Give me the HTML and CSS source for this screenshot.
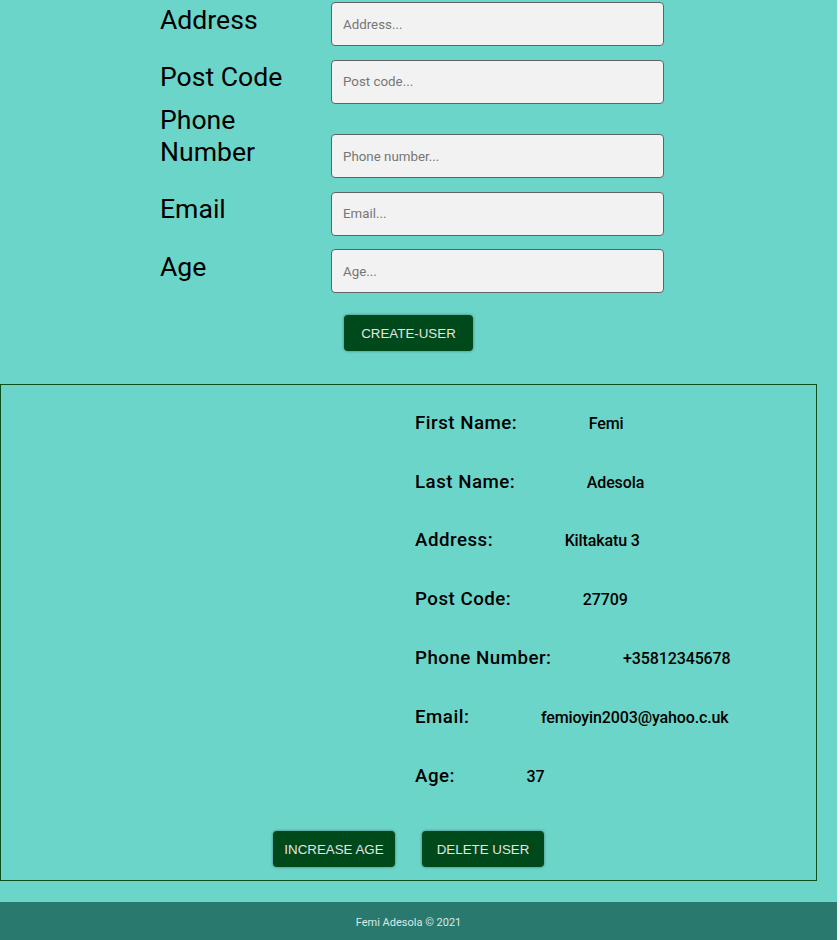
FILE: index.html
```html
<!DOCTYPE html>
<html lang="en">
<head>
<meta charset="utf-8">
<title>Users</title>
<link rel="stylesheet" href="styles.css">
</head>
<body>
<div class="page">
  <form class="user-form">
    <div class="form-row first"><label class="form-label">Address</label><input class="form-input" type="text" placeholder="Address..."></div>
    <div class="form-row"><label class="form-label">Post Code</label><input class="form-input" type="text" placeholder="Post code..."></div>
    <div class="form-row"><label class="form-label">Phone Number</label><input class="form-input" type="text" placeholder="Phone number..."></div>
    <div class="form-row"><label class="form-label">Email</label><input class="form-input" type="text" placeholder="Email..."></div>
    <div class="form-row"><label class="form-label">Age</label><input class="form-input" type="text" placeholder="Age..."></div>
    <div class="form-actions"><button type="button" class="btn btn-create">CREATE-USER</button></div>
  </form>

  <section class="user-card">
    <div class="user-media"></div>
    <div class="user-info">
      <div class="info-row"><h3 class="info-label">First Name:</h3><p class="info-value">Femi</p></div>
      <div class="info-row"><h3 class="info-label">Last Name:</h3><p class="info-value">Adesola</p></div>
      <div class="info-row"><h3 class="info-label">Address:</h3><p class="info-value">Kiltakatu 3</p></div>
      <div class="info-row"><h3 class="info-label">Post Code:</h3><p class="info-value">27709</p></div>
      <div class="info-row"><h3 class="info-label">Phone Number:</h3><p class="info-value">+35812345678</p></div>
      <div class="info-row"><h3 class="info-label">Email:</h3><p class="info-value">femioyin2003@yahoo.c.uk</p></div>
      <div class="info-row"><h3 class="info-label">Age:</h3><p class="info-value">37</p></div>
    </div>
    <div class="card-actions">
      <button type="button" class="btn btn-action">INCREASE AGE</button>
      <button type="button" class="btn btn-action">DELETE USER</button>
    </div>
  </section>
</div>
<footer class="site-footer">Femi Adesola © 2021</footer>
</body>
</html>
```
FILE: styles.css
```css
html {
  background: #f1f3f3;
}
body {
  margin: 0;
  width: 837px;
  background: #6cd5c9;
  font-family: Roboto, "Liberation Sans", sans-serif;
  color: #000;
}
.page {
  width: 817px;
  padding-bottom: 21px;
}
.user-form {
  padding: 2px 0 0 160px;
  margin: 0;
}
.form-row {
  font-size: 26.6px;
  line-height: 32px;
}
.form-label {
  display: inline-block;
  width: 171px;
  font-size: 26.6px;
  line-height: 32px;
  vertical-align: baseline;
}
.form-input {
  display: inline-block;
  vertical-align: baseline;
  box-sizing: border-box;
  width: 333px;
  height: 44px;
  margin: 13.5px 0 0;
  padding: 0 11px;
  border: 1px solid #5f6362;
  border-radius: 4px;
  background: #f2f2f2;
  font-family: Roboto, sans-serif;
  font-size: 13.33px;
  color: #222;
}
.form-row.first .form-input {
  margin-top: 0;
}
.form-input::placeholder {
  color: #767676;
}
.form-actions {
  margin-left: -160px;
  padding-top: 22px;
  text-align: center;
}
.btn {
  box-sizing: border-box;
  height: 36px;
  padding: 0;
  border: none;
  border-radius: 4px;
  background: #00491a;
  color: #e4e4e4;
  font-family: "Liberation Sans", Arial, sans-serif;
  font-size: 13.33px;
  box-shadow: 0 0 3px rgba(0, 0, 0, 0.45);
  cursor: pointer;
}
.btn-create {
  width: 129px;
}
.btn-action {
  width: 122px;
}
.user-card {
  box-sizing: border-box;
  width: 817px;
  margin-top: 33px;
  border: 1px solid #0c4f18;
  padding: 9px 0 13px;
  display: grid;
  grid-template-columns: 414px 1fr;
}
.user-info {
  display: flex;
  flex-direction: column;
}
.info-row {
  display: flex;
  align-items: baseline;
  padding: 17.9px 0;
}
.info-label {
  margin: 0;
  font-size: 18.72px;
  line-height: 22px;
  font-weight: 500;
  letter-spacing: 0.5px;
}
.info-value {
  margin: 0 0 0 71.5px;
  font-size: 16px;
  line-height: 22px;
  font-weight: 500;
  letter-spacing: -0.12px;
}
.card-actions {
  grid-column: 1 / -1;
  display: flex;
  justify-content: center;
  gap: 27px;
  margin-top: 26px;
}
.site-footer {
  height: 34px;
  line-height: 34px;
  padding: 4px 20px 0 0;
  background: #29796f;
  color: #dce9e6;
  font-size: 11px;
  text-align: center;
  width: 817px;
}
```
